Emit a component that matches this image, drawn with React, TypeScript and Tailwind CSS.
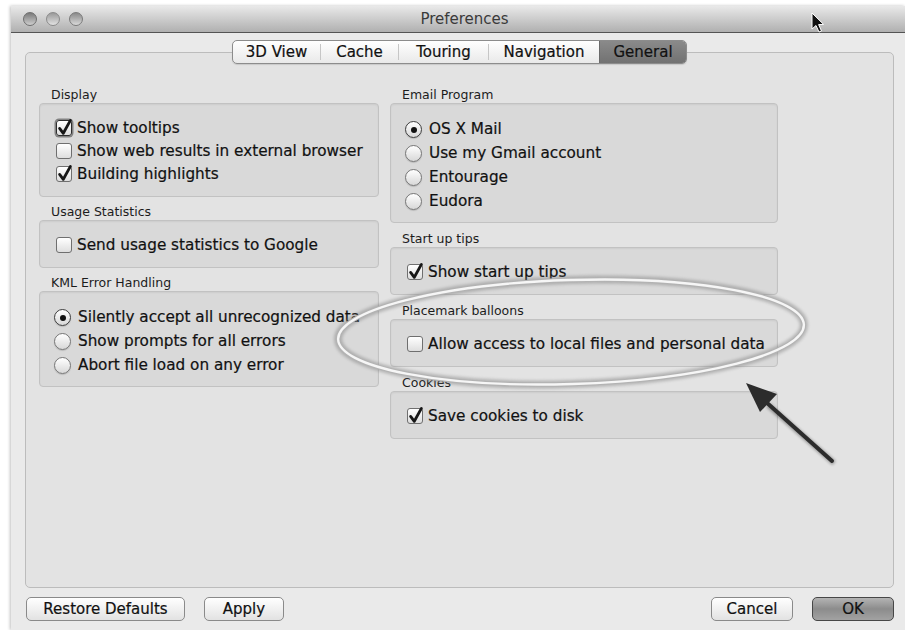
import type { ReactNode } from 'react'

type Item = { label: string; on?: boolean; focused?: boolean }

interface GroupProps {
  title: string
  kind: 'check' | 'radio'
  items: Item[]
}

function CheckBox({ on, focused }: { on?: boolean; focused?: boolean }) {
  return (
    <span
      className={
        'relative block h-[16px] w-[16px] shrink-0 rounded-[3px] border bg-linear-to-b from-white to-[#dedede] ' +
        (focused
          ? 'border-[#2e2e2e] shadow-[0_0_0_1.5px_rgba(0,0,0,0.4)]'
          : 'border-[#6f6f6f]')
      }
    >
      {on && (
        <svg
          className="absolute left-0 top-0 overflow-visible"
          width="16"
          height="16"
          viewBox="0 0 16 16"
          aria-hidden="true"
        >
          <path
            d="M2.6 7.4 L6.3 12.3 L13.4 -0.6"
            fill="none"
            stroke="#161616"
            strokeWidth="2.8"
            strokeLinecap="round"
            strokeLinejoin="round"
          />
        </svg>
      )}
    </span>
  )
}

function Radio({ on }: { on?: boolean }) {
  return (
    <span
      className={
        'flex h-[17px] w-[17px] shrink-0 items-center justify-center rounded-full border bg-linear-to-b from-white to-[#d8d8d8] shadow-[0_1px_1px_rgba(0,0,0,0.15)] ' +
        (on ? 'border-[#3e3e3e]' : 'border-[#777]')
      }
    >
      {on && <span className="block h-[6px] w-[6px] rounded-full bg-[#111]" />}
    </span>
  )
}

function Group({ title, kind, items }: GroupProps) {
  const radio = kind === 'radio'
  return (
    <div className="flex flex-col">
      <div className="h-[16px] pl-[12px] text-[12.5px] leading-[16px] text-[#1c1c1c]">{title}</div>
      <div
        className={
          'rounded-[4px] border border-[#c2c2c2] bg-[#d9d9d9] shadow-[inset_0_1px_2px_rgba(0,0,0,0.06)] ' +
          (radio ? 'pt-[13px] pb-[9px]' : 'pt-[12px] pb-[11px]')
        }
      >
        {items.map((it) => (
          <div
            key={it.label}
            className={
              'flex items-center pt-px text-[15.25px] text-[#111] [-webkit-text-stroke:0.2px_#111] ' +
              (radio ? 'h-[24px] gap-[7px] pl-[14px]' : 'h-[23px] gap-[5px] pl-[16px]')
            }
          >
            {radio ? <Radio on={it.on} /> : <CheckBox on={it.on} focused={it.focused} />}
            <span className="whitespace-nowrap">{it.label}</span>
          </div>
        ))}
      </div>
    </div>
  )
}

function Button({ children, width, primary }: { children: ReactNode; width: string; primary?: boolean }) {
  return (
    <div
      className={
        'flex h-[24px] items-center justify-center rounded-[5px] border text-[15px] [-webkit-text-stroke:0.2px_#111] ' +
        width +
        ' ' +
        (primary
          ? 'border-[#474747] bg-linear-to-b from-[#b4b4b4] via-[#8c8c8c] to-[#a2a2a2] text-[#111]'
          : 'border-[#8a8a8a] bg-linear-to-b from-white to-[#e2e2e2] text-[#111]')
      }
    >
      {children}
    </div>
  )
}

const tabs = [
  { name: '3D View', w: 'w-[87px]' },
  { name: 'Cache', w: 'w-[78px]' },
  { name: 'Touring', w: 'w-[90px]' },
  { name: 'Navigation', w: 'w-[111px]' },
]

function TabStrip() {
  return (
    <div className="relative z-10 flex justify-center">
      <div className="flex h-[24px] overflow-hidden rounded-[5px] border border-[#8c8c8c] bg-linear-to-b from-white to-[#e9e9e9] shadow-[0_1px_1px_rgba(0,0,0,0.12)]">
        {tabs.map((t, i) => (
          <div key={t.name} className={'flex items-center ' + t.w}>
            {i > 0 && <span className="block h-[16px] w-px bg-[#c6c6c6]" />}
            <span className="flex-1 text-center text-[15px] leading-[22px] text-[#111] [-webkit-text-stroke:0.2px_#111]">
              {t.name}
            </span>
          </div>
        ))}
        <div className="flex w-[87px] items-center justify-center border-l border-[#6a6a6a] bg-linear-to-b from-[#8a8a8a] to-[#727272] text-[15px] text-[#111] [-webkit-text-stroke:0.2px_#111]">
          General
        </div>
      </div>
    </div>
  )
}

function TitleBar() {
  return (
    <div className="flex h-[27px] shrink-0 items-center border-b border-[#545454] bg-linear-to-b from-[#e9e9e9] to-[#b0b0b0]">
      <div className="flex gap-[9px] pl-[12px]">
        <span className="block h-[14px] w-[14px] rounded-full border border-[#6e6e6e] bg-linear-to-b from-[#7a7a7a] to-[#cfcfcf]" />
        <span className="block h-[14px] w-[14px] rounded-full border border-[#8a8a8a] bg-linear-to-b from-[#9a9a9a] to-[#e2e2e2]" />
        <span className="block h-[14px] w-[14px] rounded-full border border-[#7a7a7a] bg-linear-to-b from-[#8a8a8a] to-[#dadada]" />
      </div>
      <div className="flex-1 pr-[59px] text-center text-[15px] text-[#3a3a3a]">Preferences</div>
    </div>
  )
}

export default function App() {
  return (
    <div className="relative h-[630px] w-[905px] overflow-hidden bg-white pl-[11px] pt-[6px] font-['DejaVu_Sans',sans-serif] text-[#1a1a1a]">
      <div className="flex h-[624px] flex-col bg-[#eaeaea] shadow-[-1px_0_3px_rgba(0,0,0,0.25)]">
        <TitleBar />
        <div className="flex flex-1 flex-col pl-[14px] pr-[11px] pt-[7px]">
          <TabStrip />
          <div className="-mt-[12px] flex-1 rounded-[5px] border border-[#bcbcbc] bg-[#e3e3e3] pl-[13px] pt-[34px]">
            <div className="grid grid-cols-[340px_388px] items-start gap-x-[11px]">
              <div className="flex flex-col gap-[7px]">
                <Group
                  title="Display"
                  kind="check"
                  items={[
                    { label: 'Show tooltips', on: true, focused: true },
                    { label: 'Show web results in external browser' },
                    { label: 'Building highlights', on: true },
                  ]}
                />
                <Group title="Usage Statistics" kind="check" items={[{ label: 'Send usage statistics to Google' }]} />
                <Group
                  title="KML Error Handling"
                  kind="radio"
                  items={[
                    { label: 'Silently accept all unrecognized data', on: true },
                    { label: 'Show prompts for all errors' },
                    { label: 'Abort file load on any error' },
                  ]}
                />
              </div>
              <div className="flex flex-col gap-[8px]">
                <Group
                  title="Email Program"
                  kind="radio"
                  items={[
                    { label: 'OS X Mail', on: true },
                    { label: 'Use my Gmail account' },
                    { label: 'Entourage' },
                    { label: 'Eudora' },
                  ]}
                />
                <Group title="Start up tips" kind="check" items={[{ label: 'Show start up tips', on: true }]} />
                <Group
                  title="Placemark balloons"
                  kind="check"
                  items={[{ label: 'Allow access to local files and personal data' }]}
                />
                <Group title="Cookies" kind="check" items={[{ label: 'Save cookies to disk', on: true }]} />
              </div>
            </div>
          </div>
          <div className="flex items-center pb-[9px] pt-[9px]">
            <div className="ml-[1px]">
              <Button width="w-[159px]">Restore Defaults</Button>
            </div>
            <div className="ml-[19px]">
              <Button width="w-[80px]">Apply</Button>
            </div>
            <div className="ml-auto flex gap-[19px]">
              <Button width="w-[82px]">Cancel</Button>
              <Button width="w-[82px]" primary>
                OK
              </Button>
            </div>
          </div>
        </div>
      </div>

      {/* callout ring, arrow and pointer drawn on top of the dialog */}
      <svg className="pointer-events-none absolute inset-0" width="905" height="630" aria-hidden="true">
        <defs>
          <filter id="soft" x="-10%" y="-30%" width="120%" height="160%">
            <feGaussianBlur stdDeviation="1.6" />
          </filter>
        </defs>
        <g transform="rotate(-1.8 571 332)">
          <ellipse cx="571" cy="332" rx="233" ry="52" fill="none" stroke="#7a7a7a" strokeWidth="8" opacity="0.45" filter="url(#soft)" />
          <ellipse cx="571" cy="332" rx="233" ry="52" fill="none" stroke="#b3b3b3" strokeWidth="4.5" />
          <ellipse cx="571" cy="332" rx="233" ry="52" fill="none" stroke="#f6f6f6" strokeWidth="2.4" />
        </g>
        <g filter="url(#soft)" opacity="0.35">
          <line x1="834" y1="463" x2="768" y2="405" stroke="#000" strokeWidth="5" />
        </g>
        <line x1="832" y1="461" x2="766" y2="402" stroke="#2c2c2c" strokeWidth="4" strokeLinecap="round" />
        <polygon points="746,383 777,394 760,412" fill="#2c2c2c" />
        <path
          d="M812 13 L812 29 L816 25.5 L819 32 L821.5 31 L818.6 24.6 L823.6 24.4 Z"
          fill="#111"
          stroke="#fff"
          strokeWidth="1"
          strokeLinejoin="round"
        />
      </svg>
    </div>
  )
}
